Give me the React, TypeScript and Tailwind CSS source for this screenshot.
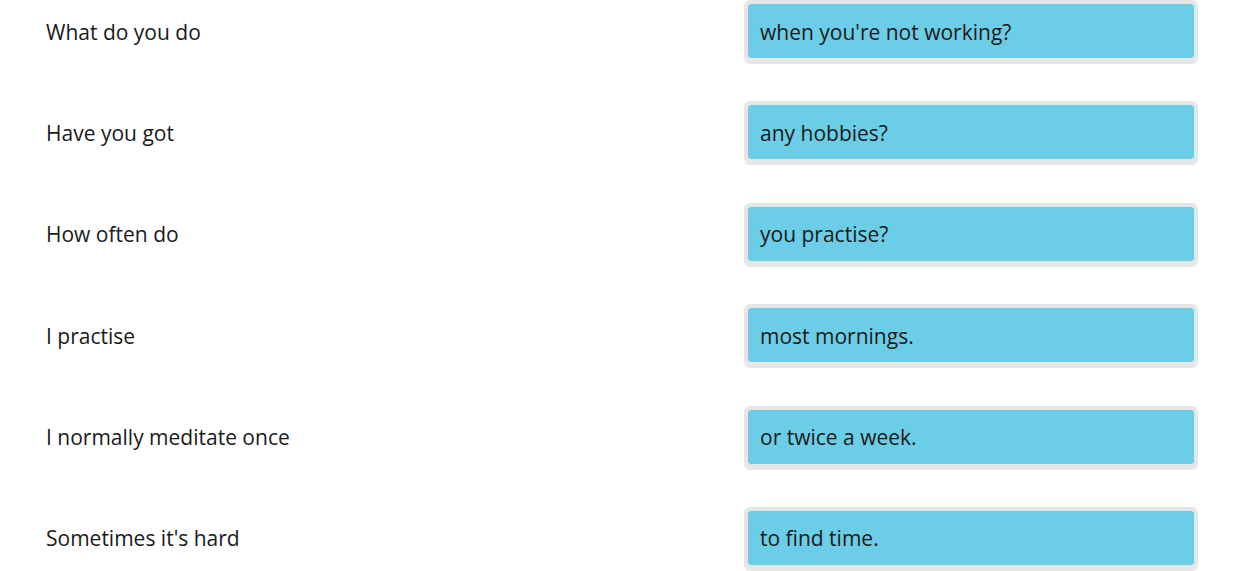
import React from 'react';

const rows = [
  { left: 'What do you do', right: "when you're not working?" },
  { left: 'Have you got', right: 'any hobbies?' },
  { left: 'How often do', right: 'you practise?' },
  { left: 'I practise', right: 'most mornings.' },
  { left: 'I normally meditate once', right: 'or twice a week.' },
  { left: 'Sometimes it\'s hard', right: 'to find time.' },
];

const App: React.FC = () => {
  return (
    <div className="w-[1243px] h-[571px] overflow-hidden bg-white font-['Open_Sans',sans-serif] text-[21px] text-[#1a1a1a]">
      <div className="flex flex-col gap-[39.4px]">
        {rows.map((row, i) => (
          <div key={i} className="flex items-center">
            <div className="flex-1 pl-[46px] pt-[1px] leading-[28px]">{row.left}</div>
            <div className="mr-[45px] w-[454px] rounded-[6px] border-4 border-[#e6e6e6] shadow-[0_2px_0_#e6e6e6]">
              <div className="flex h-[54px] items-center rounded-[3px] bg-[#6bcde6] px-3 pt-[1px] leading-[28px]">
                {row.right}
              </div>
            </div>
          </div>
        ))}
      </div>
    </div>
  );
};

export default App;
